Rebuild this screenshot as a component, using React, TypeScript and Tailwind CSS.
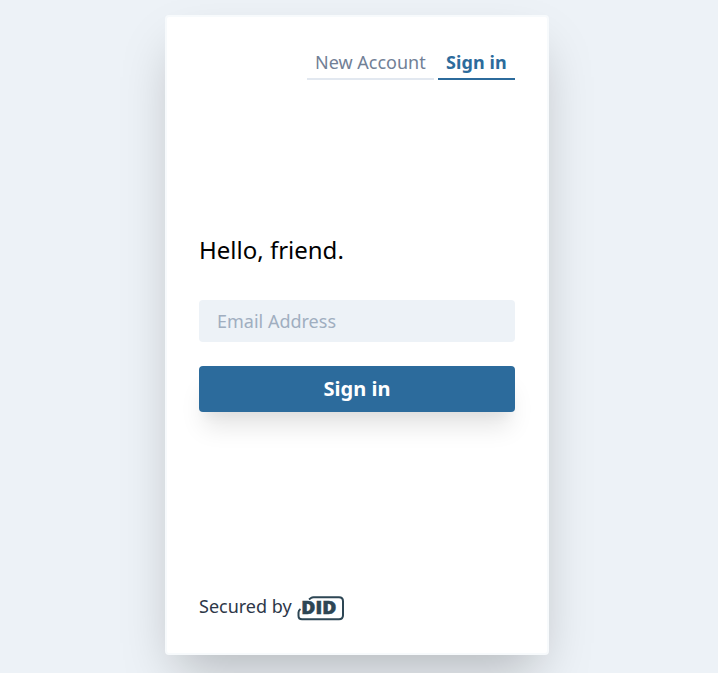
export default function App() {
  return (
    <div className="flex h-[673px] justify-center overflow-hidden bg-[#edf2f7] pt-[15px] pr-1 font-['Noto_Sans',sans-serif]">
      <main className="flex h-[640px] w-96 flex-col rounded border-2 border-[#f7fafc] bg-white px-8 pt-7 pb-8 shadow-[0_25px_50px_-12px_rgba(0,0,0,0.25)]">
        <nav className="flex justify-end gap-1 text-lg leading-[27px]">
          <a className="w-[127px] border-b-2 border-[#e2e8f0] px-2 pt-1 pb-0.5 whitespace-nowrap text-[#718096]">New Account</a>
          <a className="w-[77px] border-b-2 border-[#2c6b9c] px-2 pt-1 pb-0.5 font-bold tracking-[0.1px] whitespace-nowrap text-[#2c6b9c]">Sign in</a>
        </nav>
        <section className="flex flex-1 flex-col justify-center pb-[30px]">
          <h1 className="mb-8 text-2xl leading-9 text-black">Hello, friend.</h1>
          <input
            className="mb-6 h-[42px] rounded-sm bg-[#edf2f7] px-[18px] text-lg placeholder:text-[#a0aec0]"
            placeholder="Email Address"
          />
          <button className="h-[46px] rounded-sm bg-[#2c6b9c] text-xl font-bold text-white shadow-[0_20px_25px_-5px_rgba(0,0,0,0.1),0_10px_10px_-5px_rgba(0,0,0,0.04)]">
            Sign in
          </button>
        </section>
        <footer className="flex items-start gap-1 text-lg leading-[27px] text-[#2d3748]">
          <span className="-mt-px">Secured by</span>
          <svg width="48" height="27" viewBox="0 0 48 27" fill="none" aria-label="DID">
            <path d="M13 5.500 L15 4 Q16 3.300 17.500 3.300 H43 Q47 3.300 47 7.300 V21.300 Q47 25.300 43 25.300 H6 Q2.500 25.300 2.500 21.800 V18.500 Q2.500 16.500 4.500 15" stroke="#2d4654" strokeWidth="2" />
            <text x="5.300" y="19.500" fill="#2d4654" stroke="#2d4654" strokeWidth="0.500" fontFamily="Open Sans" fontWeight="800" fontSize="17" textLength="35" lengthAdjust="spacingAndGlyphs">DID</text>
          </svg>
        </footer>
      </main>
    </div>
  );
}
